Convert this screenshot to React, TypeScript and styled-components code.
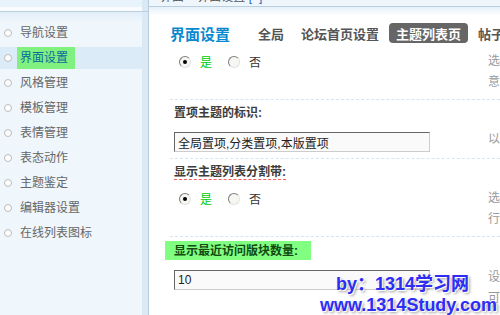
import React from 'react';
import styled, { createGlobalStyle } from 'styled-components';

const GlobalStyle = createGlobalStyle`
  html, body {
    margin: 0;
    padding: 0;
    background: #fff;
    overflow: hidden;
  }
  body {
    font: 12px "Liberation Sans", "Noto Sans CJK SC", sans-serif;
    color: #333;
  }
`;

const Page = styled.div`
  position: relative;
  display: flex;
  width: 500px;
  height: 315px;
  overflow: hidden;
`;

const Sidebar = styled.div`
  width: 142px;
  display: flex;
  flex-direction: column;
  flex-shrink: 0;
`;

const SideTop = styled.div`
  height: 11px;
  background: linear-gradient(#e9f3fb 0 7px, #f9fbfe 7px);
  border-bottom: 1px solid #b9cfdf;
`;

const SideList = styled.ul`
  flex: 1;
  margin: 0;
  padding: 7px 0 0;
  list-style: none;
  background: linear-gradient(#e1eef8, #eff6fc 10px);
`;

const SideItem = styled.li<{ $active?: boolean }>`
  display: flex;
  align-items: center;
  height: 22px;
  margin-top: 3px;
  padding-left: 4px;
  color: #666;
  background: ${(p) => (p.$active ? '#dbebf7' : 'transparent')};
`;

const Bullet = styled.span`
  width: 6px;
  height: 6px;
  border: 1px solid #bbb;
  border-radius: 50%;
  background: #fff;
  margin-right: 8px;
`;

const SideLabel = styled.span<{ $active?: boolean }>`
  line-height: 16px;
  ${(p) =>
    p.$active &&
    `
    color: #0b6a9e;
    background: #80f080;
    padding: 3px 7px 3px 3px;
    margin-left: -3px;
  `}
`;

const Splitter = styled.div`
  width: 6px;
  flex-shrink: 0;
  border-right: 1px solid #b6cde0;
  background: linear-gradient(#dbe9f5 0 11px, #b9cfdf 11px 12px, #dbe9f5 12px);
`;

const Main = styled.div`
  flex: 1;
  min-width: 0;
  display: flex;
  flex-direction: column;
`;

const MainTop = styled.div`
  height: 11px;
  overflow: hidden;
  background: #eef6fc;
  border-bottom: 1px solid #b9cfdf;
`;

const Crumb = styled.div`
  margin-top: -10px;
  padding-left: 11px;
  line-height: 14px;
  color: #555;
  white-space: nowrap;

  b {
    color: #2a64b0;
    font-weight: normal;
  }
`;

const Content = styled.div`
  flex: 1;
  padding: 16px 0 0 21px;
  background: linear-gradient(#e6f1fa, #fff 9px);
`;

const Header = styled.div`
  display: flex;
  align-items: center;
  height: 20px;
  white-space: nowrap;
`;

const Title = styled.h3`
  margin: 0 21px 0 0;
  font-size: 15px;
  font-weight: bold;
  color: #0b89cf;
`;

const Tab = styled.span<{ $active?: boolean }>`
  display: inline-flex;
  align-items: center;
  height: 20px;
  padding: 0 7px;
  margin-right: 3px;
  border-radius: 4px;
  font-size: 13px;
  font-weight: bold;
  color: ${(p) => (p.$active ? '#fff' : '#555')};
  background: ${(p) => (p.$active ? '#666' : 'transparent')};
`;

const Section = styled.div<{ $first?: boolean }>`
  border-top: ${(p) => (p.$first ? 'none' : '1px dashed #d4e6f1')};
`;

const LabelRow = styled.div`
  padding: 5px 0 0 4px;
  line-height: 16px;
`;

const Label = styled.span<{ $mark?: boolean; $highlight?: boolean }>`
  display: inline-block;
  font-weight: bold;
  color: ${(p) => (p.$highlight ? '#124a12' : '#3c3c3c')};
  ${(p) =>
    p.$mark &&
    `
    text-decoration: underline dashed #ff5a5a;
    text-underline-offset: 3px;
  `}
  ${(p) =>
    p.$highlight &&
    `
    background: #80ff80;
    padding: 2px 13px 1px 9px;
    margin: -1px 0 -2px -9px;
  `}
`;

const ControlRow = styled.div`
  display: grid;
  grid-template-columns: 314px 1fr;
  padding: 8px 0 6px 4px;
`;

const Radios = styled.div`
  display: flex;
  align-items: center;
  height: 21px;
`;

const RadioDot = styled.span<{ $checked?: boolean }>`
  position: relative;
  box-sizing: border-box;
  width: 12px;
  height: 12px;
  margin-left: 5px;
  border-radius: 50%;
  border: 1px solid;
  border-color: #7d7d7d #e2e2e2 #e2e2e2 #7d7d7d;
  background: #f6f6f2;

  &::after {
    content: '';
    display: ${(p) => (p.$checked ? 'block' : 'none')};
    position: absolute;
    left: 3px;
    top: 3px;
    width: 4px;
    height: 4px;
    border-radius: 50%;
    background: #000;
  }
`;

const RadioText = styled.span<{ $on?: boolean }>`
  margin: 0 11px 0 9px;
  color: ${(p) => (p.$on ? '#00cc00' : '#333')};
`;

const TextInput = styled.input`
  box-sizing: border-box;
  width: 256px;
  height: 20px;
  margin: 3px 0 0;
  padding: 0 3px;
  border: 1px solid;
  border-color: #666 #ccc #ccc #666;
  background: #fafafa;
  font: 12px "Liberation Sans", "Noto Sans CJK SC", sans-serif;
  color: #222;
`;

const Desc = styled.div`
  color: #999;
  line-height: 21px;
  white-space: nowrap;
  overflow: hidden;
`;

const Watermark = styled.div`
  position: absolute;
  left: 316px;
  top: 274px;
  font: bold 18px/21px "Liberation Sans", "Noto Sans CJK SC", sans-serif;
  color: #2d2df5;
  text-shadow: 1px 1px 0 #fff, 2px 2px 3px #9a9a9a;
  white-space: nowrap;
  pointer-events: none;
`;

const MarkLine = styled.div<{ $indent: number }>`
  padding-left: ${(p) => p.$indent}px;
`;

const menu = ['导航设置', '界面设置', '风格管理', '模板管理', '表情管理', '表态动作', '主题鉴定', '编辑器设置', '在线列表图标'];
const tabs = ['全局', '论坛首页设置', '主题列表页', '帖子内容页', '弹出菜单'];

const YesNo: React.FC = () => (
  <Radios>
    <RadioDot $checked />
    <RadioText $on>是</RadioText>
    <RadioDot />
    <RadioText>否</RadioText>
  </Radios>
);

export default function App() {
  return (
    <>
      <GlobalStyle />
      <Page>
        <Sidebar>
          <SideTop />
          <SideList>
            {menu.map((m) => (
              <SideItem key={m} $active={m === '界面设置'}>
                <Bullet />
                <SideLabel $active={m === '界面设置'}>{m}</SideLabel>
              </SideItem>
            ))}
          </SideList>
        </Sidebar>
        <Splitter />
        <Main>
          <MainTop>
            <Crumb>
              界面 &raquo; 界面设置 <b>[+]</b>
            </Crumb>
          </MainTop>
          <Content>
            <Header>
              <Title>界面设置</Title>
              {tabs.map((t) => (
                <Tab key={t} $active={t === '主题列表页'}>
                  {t}
                </Tab>
              ))}
            </Header>

            <Section $first>
              <ControlRow>
                <YesNo />
                <Desc>
                  选择“是”将在主题列表中显示帖子作者信息
                  <br />
                  意：开启后会稍微增加服务器负担
                </Desc>
              </ControlRow>
            </Section>

            <Section>
              <LabelRow>
                <Label>置项主题的标识:</Label>
              </LabelRow>
              <ControlRow>
                <TextInput defaultValue="全局置项,分类置项,本版置项" />
                <Desc>以逗号分隔，依次为全局、分类、本版</Desc>
              </ControlRow>
            </Section>

            <Section>
              <LabelRow>
                <Label $mark>显示主题列表分割带:</Label>
              </LabelRow>
              <ControlRow>
                <YesNo />
                <Desc>
                  选择“是”将在置顶主题与普通主题之间
                  <br />
                  行显示分割带
                </Desc>
              </ControlRow>
            </Section>

            <Section>
              <LabelRow>
                <Label $highlight>显示最近访问版块数量:</Label>
              </LabelRow>
              <ControlRow>
                <TextInput defaultValue="10" />
                <Desc>
                  设置在主题列表页显示的最近访问版块数量
                  <br />
                  可以设置为 0 表示不显示
                </Desc>
              </ControlRow>
            </Section>
          </Content>
        </Main>
        <Watermark>
          <MarkLine $indent={20}>by：1314学习网</MarkLine>
          <MarkLine $indent={4}>www.1314Study.com</MarkLine>
        </Watermark>
      </Page>
    </>
  );
}
